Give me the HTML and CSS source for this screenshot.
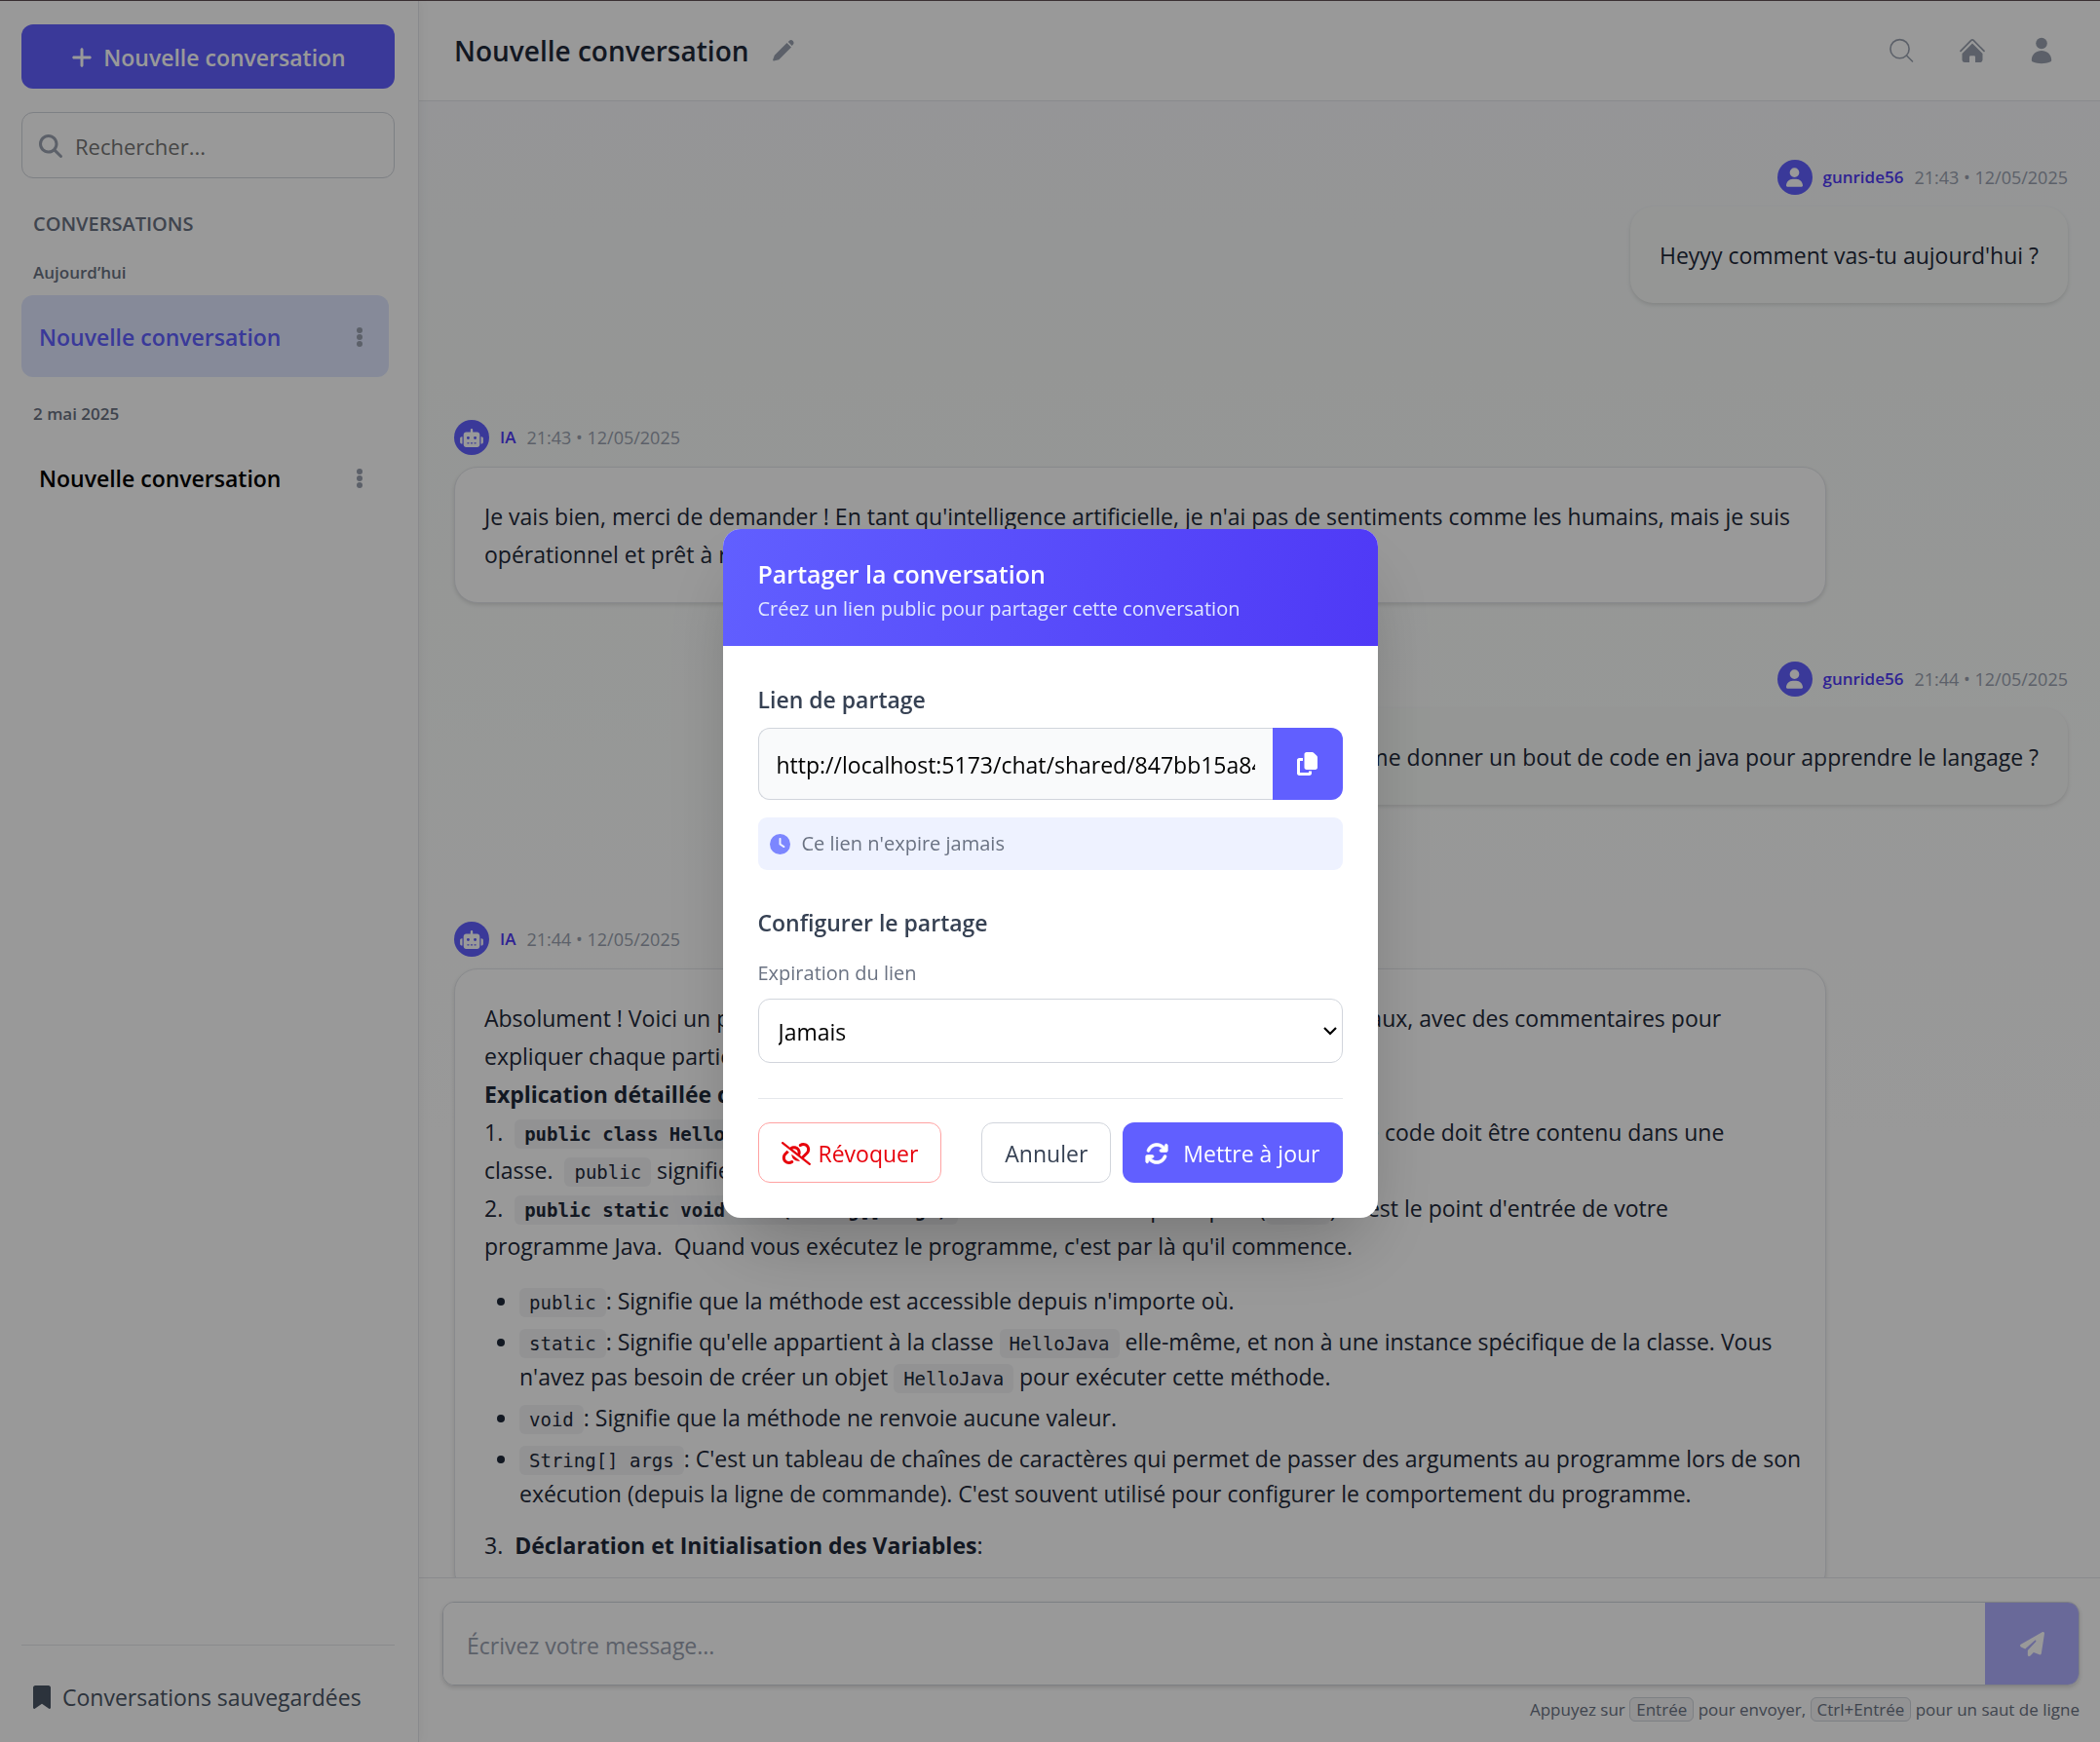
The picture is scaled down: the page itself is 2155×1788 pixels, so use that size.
FILE: index.html
```html
<!DOCTYPE html>
<html lang="fr">
<head>
<meta charset="utf-8">
<title>Nouvelle conversation</title>
<link rel="stylesheet" href="styles.css">
</head>
<body>
<svg class="sprite" aria-hidden="true">
  <symbol id="i-user" viewBox="0 0 448 512"><path d="M224 256A128 128 0 1 0 224 0a128 128 0 1 0 0 256zm-45.700 48C79.800 304 0 383.800 0 482.300C0 498.700 13.300 512 29.700 512H418.300c16.400 0 29.700-13.300 29.700-29.700C448 383.800 368.200 304 269.700 304H178.300z"/></symbol>
  <symbol id="i-robot" viewBox="0 0 640 512"><path d="M320 0c17.700 0 32 14.300 32 32V96H472c39.800 0 72 32.200 72 72V440c0 39.800-32.200 72-72 72H168c-39.800 0-72-32.200-72-72V168c0-39.800 32.200-72 72-72H288V32c0-17.700 14.300-32 32-32zM208 384c-8.800 0-16 7.200-16 16s7.200 16 16 16h32c8.800 0 16-7.200 16-16s-7.200-16-16-16H208zm96 0c-8.800 0-16 7.200-16 16s7.200 16 16 16h32c8.800 0 16-7.200 16-16s-7.200-16-16-16H304zm96 0c-8.800 0-16 7.200-16 16s7.200 16 16 16h32c8.800 0 16-7.200 16-16s-7.200-16-16-16H400zM264 256a40 40 0 1 0 -80 0 40 40 0 1 0 80 0zm152 40a40 40 0 1 0 0-80 40 40 0 1 0 0 80zM48 224H64V416H48c-26.500 0-48-21.500-48-48V272c0-26.500 21.500-48 48-48zm544 0c26.500 0 48 21.500 48 48v96c0 26.500-21.500 48-48 48H576V224h16z"/></symbol>
  <symbol id="i-dots" viewBox="0 0 6 20"><circle cx="3" cy="3" r="3"/><circle cx="3" cy="10" r="3"/><circle cx="3" cy="17" r="3"/></symbol>
</svg>

<div class="app">
  <aside class="sidebar">
    <button class="new-chat" type="button">
      <svg width="24" height="24" viewBox="0 0 448 512"><path d="M256 80c0-17.700-14.300-32-32-32s-32 14.300-32 32V224H48c-17.700 0-32 14.300-32 32s14.300 32 32 32H192V432c0 17.700 14.300 32 32 32s32-14.300 32-32V288H400c17.700 0 32-14.300 32-32s-14.300-32-32-32H256V80z"/></svg>
      Nouvelle conversation
    </button>
    <label class="search">
      <svg width="24" height="24" viewBox="0 0 512 512"><path d="M416 208c0 45.900-14.900 88.300-40 122.700L502.600 457.400c12.500 12.500 12.500 32.800 0 45.300s-32.800 12.500-45.300 0L330.700 376c-34.400 25.200-76.800 40-122.700 40C93.100 416 0 322.900 0 208S93.100 0 208 0S416 93.100 416 208zM208 352a144 144 0 1 0 0-288 144 144 0 1 0 0 288z"/></svg>
      <input type="text" placeholder="Rechercher..." aria-label="Rechercher">
    </label>
    <h2 class="side-title">CONVERSATIONS</h2>
    <h3 class="side-date">Aujourd’hui</h3>
    <div class="conv conv-active">
      <a href="#">Nouvelle conversation</a>
      <button type="button" aria-label="Options"><svg width="6" height="20"><use href="#i-dots"/></svg></button>
    </div>
    <h3 class="side-date side-date-next">2 mai 2025</h3>
    <div class="conv">
      <a href="#">Nouvelle conversation</a>
      <button type="button" aria-label="Options"><svg width="6" height="20"><use href="#i-dots"/></svg></button>
    </div>
    <div class="side-foot">
      <a href="#">
        <svg width="18" height="24" viewBox="0 0 384 512"><path d="M0 48V487.700C0 501.100 10.900 512 24.300 512c5 0 9.900-1.500 14-4.400L192 400 345.700 507.600c4.100 2.900 9 4.400 14 4.400c13.400 0 24.300-10.900 24.300-24.300V48c0-26.500-21.500-48-48-48H48C21.500 0 0 21.500 0 48z"/></svg>
        Conversations sauvegardées
      </a>
    </div>
  </aside>

  <main class="main">
    <header class="topbar">
      <h1>Nouvelle conversation</h1>
      <button type="button" aria-label="Renommer"><svg width="22" height="22" viewBox="0 0 22 22"><path d="M1 21.500c-.8 0-1-.6-.8-1.300l1.600-4.500L14.500 3l4.500 4.500L6.300 20.200zM15.800 2l1.200-1.200c1.200-1 2.600-.9 3.700.2s1.100 2.600.1 3.700L19.700 6z"/></svg></button>
      <nav>
        <a href="#" aria-label="Rechercher"><svg width="26" height="26" viewBox="0 0 26 26" fill="none" stroke="currentColor" stroke-width="1.600" stroke-linecap="round"><circle cx="11.500" cy="11.200" r="9.600"/><path d="M18.500 18l6 6"/></svg></a>
        <a href="#" aria-label="Accueil"><svg width="28" height="26" viewBox="0 0 28 26"><path d="M2 13.400L12.800 2.400q1.200-1.100 2.400 0L26 13.400" fill="none" stroke="currentColor" stroke-width="1.700" stroke-linecap="round"/><path d="M14 5.500l10.500 10.400v6.700q0 2.400-2.400 2.400H17v-5.500q0-1.200-1.200-1.200h-3.600q-1.200 0-1.200 1.200V25H5.900q-2.400 0-2.400-2.400v-6.700z"/></svg></a>
        <a href="#" aria-label="Profil"><svg width="22" height="28" viewBox="0 0 22 28"><circle cx="11" cy="6.500" r="5.800"/><path d="M.8 23.500C1 17.800 5.600 14 11 14s10 3.800 10.200 9.500c0 1-.4 1.600-1.300 2-5.400 2.200-12.400 2.200-17.800 0-.9-.4-1.300-1-1.300-2z"/></svg></a>
      </nav>
    </header>

    <section class="chat">
      <article class="msg msg-user">
        <div class="meta"><span class="avatar"><svg width="17" height="20"><use href="#i-user"/></svg></span><b>gunride56</b><time>21:43 • 12/05/2025</time></div>
        <div class="bubble">Heyyy comment vas-tu aujourd'hui ?</div>
      </article>
      <article class="msg">
        <div class="meta"><span class="avatar"><svg width="24" height="19"><use href="#i-robot"/></svg></span><b>IA</b><time>21:43 • 12/05/2025</time></div>
        <div class="bubble">Je vais bien, merci de demander ! En tant qu'intelligence artificielle, je n'ai pas de sentiments comme les humains, mais je suis<br>opérationnel et prêt à répondre à vos questions !</div>
      </article>
      <article class="msg msg-user">
        <div class="meta"><span class="avatar"><svg width="17" height="20"><use href="#i-user"/></svg></span><b>gunride56</b><time>21:44 • 12/05/2025</time></div>
        <div class="bubble">Peux-tu me donner un bout de code en java pour apprendre le langage ?</div>
      </article>
      <article class="msg">
        <div class="meta"><span class="avatar"><svg width="24" height="19"><use href="#i-robot"/></svg></span><b>IA</b><time>21:44 • 12/05/2025</time></div>
        <div class="bubble">
          Absolument ! Voici un programme Java simple qui illustre divers concepts fondamentaux, avec des commentaires pour<br>
          expliquer chaque partie :<br>
          <strong>Explication détaillée du code :</strong><br>
          1.&nbsp; <strong><code>public class HelloJava</code></strong>: Déclare une classe principale nommée HelloJava. Tout le code doit être contenu dans une<br>
          classe.&nbsp; <code>public</code> signifie que la classe est accessible.<br>
          2.&nbsp; <strong><code>public static void main(String[] args)</code></strong>: C'est la méthode principale (<code>main</code>). C'est le point d'entrée de votre<br>
          programme Java.&nbsp; Quand vous exécutez le programme, c'est par là qu'il commence.
          <ul>
            <li><code>public</code>: Signifie que la méthode est accessible depuis n'importe où.</li>
            <li><code>static</code>: Signifie qu'elle appartient à la classe <code>HelloJava</code> elle-même, et non à une instance spécifique de la classe. Vous<br>n'avez pas besoin de créer un objet <code>HelloJava</code> pour exécuter cette méthode.</li>
            <li><code>void</code>: Signifie que la méthode ne renvoie aucune valeur.</li>
            <li><code>String[] args</code>: C'est un tableau de chaînes de caractères qui permet de passer des arguments au programme lors de son<br>exécution (depuis la ligne de commande). C'est souvent utilisé pour configurer le comportement du programme.</li>
          </ul>
          3.&nbsp; <strong>Déclaration et Initialisation des Variables</strong>:
        </div>
      </article>
    </section>

    <footer class="composer">
      <form class="compose-box">
        <input type="text" placeholder="Écrivez votre message..." aria-label="Message">
        <button type="button" aria-label="Envoyer"><svg width="25" height="25" viewBox="0 0 512 512"><path d="M498.100 5.600c10.100 7 15.400 19.100 13.500 31.200l-64 416c-1.500 9.700-7.400 18.200-16 23s-18.900 5.400-28 1.600L284 427.700l-68.500 74.100c-8.900 9.700-22.900 12.900-35.200 8.100S160 493.200 160 480V396.400c0-4 1.500-7.800 4.200-10.700L331.800 202.800c5.800-6.300 5.600-16-.4-22s-15.700-6.400-22-.7L106 360.800 17.700 316.600C7.100 311.300 .3 300.700 0 288.900s5.900-22.800 16.100-28.700l448-256c10.700-6.100 23.900-5.500 34 1.400z"/></svg></button>
      </form>
      <p class="hint">Appuyez sur <kbd>Entrée</kbd> pour envoyer, <kbd>Ctrl+Entrée</kbd> pour un saut de ligne</p>
    </footer>
  </main>
</div>

<div class="overlay">
  <div class="modal" role="dialog" aria-labelledby="share-title">
    <header class="modal-head">
      <h2 id="share-title">Partager la conversation</h2>
      <p>Créez un lien public pour partager cette conversation</p>
    </header>
    <div class="modal-body">
      <label class="field-title" for="share-link">Lien de partage</label>
      <div class="link-row">
        <input id="share-link" type="text" readonly value="http://localhost:5173/chat/shared/847bb15a84c94d2f">
        <button type="button" aria-label="Copier"><svg width="25" height="24" viewBox="-32 0 512 512"><path d="M208 0H332.100c12.700 0 24.900 5.100 33.900 14.100l67.900 67.900c9 9 14.100 21.200 14.100 33.900V336c0 26.500-21.500 48-48 48H208c-26.500 0-48-21.500-48-48V48c0-26.500 21.500-48 48-48zM48 128h80v64H64V448H256V416h64v48c0 26.500-21.500 48-48 48H48c-26.500 0-48-21.500-48-48V176c0-26.500 21.500-48 48-48z"/></svg></button>
      </div>
      <p class="expiry"><svg width="21" height="21" viewBox="0 0 512 512"><path d="M256 0a256 256 0 1 1 0 512A256 256 0 1 1 256 0zM232 120V256c0 8 4 15.500 10.700 20l96 64c11 7.400 25.900 4.400 33.300-6.700s4.400-25.900-6.700-33.300L280 243.200V120c0-13.300-10.700-24-24-24s-24 10.700-24 24z"/></svg>Ce lien n'expire jamais</p>
      <h3 class="field-title section-title">Configurer le partage</h3>
      <label class="field-label" for="expiry">Expiration du lien</label>
      <div class="select">
        <select id="expiry"><option>Jamais</option></select>
        <svg width="14" height="10" viewBox="0 0 14 10" fill="none" stroke="#000" stroke-width="2.200"><path d="M1 2l6 6 6-6"/></svg>
      </div>
      <div class="actions">
        <button class="btn btn-danger" type="button"><svg width="30" height="24" viewBox="0 0 640 512"><path d="M38.800 5.100C28.400-3.100 13.300-1.200 5.100 9.200S-1.200 34.700 9.200 42.900l592 464c10.400 8.200 25.500 6.300 33.700-4.100s6.300-25.500-4.100-33.700L489.300 358.200l90.500-90.500c56.500-56.500 56.500-148 0-204.500c-50-50-128.800-56.500-186.300-15.400l-1.600 1.100c-14.400 10.300-17.700 30.300-7.400 44.600s30.300 17.700 44.600 7.400l1.600-1.100c32.100-22.900 76-19.300 103.800 8.600c31.500 31.500 31.500 82.500 0 114l-96 96-31.900-25C430.900 239.600 420.100 175.100 377 132c-52.200-52.300-134.500-56.200-191.300-11.700L38.800 5.100zM239 162c30.100-14.900 67.700-9.900 92.800 15.300c20 20 27.500 48.300 21.700 74.500L239 162zM406.600 416.400L220.900 270c-2.100 39.800 12.200 80.100 42.200 110c38.900 38.900 94.400 51 143.600 36.300zm-290-228.500L60.200 244.300c-56.500 56.500-56.500 148 0 204.500c50 50 128.800 56.500 186.300 15.400l1.600-1.100c14.400-10.300 17.700-30.300 7.400-44.600s-30.300-17.700-44.600-7.400l-1.600 1.100c-32.100 22.900-76 19.300-103.800-8.600C74 372 74 321 105.500 289.500l61.800-61.800-50.600-39.900z"/></svg>Révoquer</button>
        <button class="btn btn-plain" type="button">Annuler</button>
        <button class="btn btn-primary" type="button"><svg width="24" height="24" viewBox="0 0 512 512"><path d="M105.100 202.600c7.700-21.800 20.200-42.300 37.800-59.800c62.500-62.500 163.800-62.500 226.300 0L386.300 160H352c-17.700 0-32 14.300-32 32s14.300 32 32 32H463.900c17.700 0 32-14.300 32-32V80c0-17.700-14.300-32-32-32s-32 14.300-32 32v35.200L414.400 97.600c-87.500-87.500-229.300-87.500-316.800 0C73.200 122 55.600 150.700 44.800 181.400c-5.900 16.700 2.900 34.900 19.500 40.800s34.900-2.900 40.800-19.500zM39 289.300c-5 1.500-9.800 4.200-13.700 8.200c-4 4-6.700 8.800-8.100 14c-.3 1.200-.6 2.500-.8 3.800c-.3 1.700-.4 3.400-.4 5.100V432c0 17.700 14.300 32 32 32s32-14.300 32-32V396.900l17.600 17.500c87.500 87.400 229.300 87.400 316.700 0c24.400-24.400 42.100-53.100 52.900-83.700c5.900-16.700-2.900-34.900-19.500-40.800s-34.900 2.900-40.800 19.500c-7.700 21.800-20.200 42.300-37.800 59.800c-62.500 62.500-163.800 62.500-226.300 0L125.600 352H160c17.700 0 32-14.300 32-32s-14.300-32-32-32H48.400z" stroke="currentColor" stroke-width="14"/></svg>Mettre à jour</button>
      </div>
    </div>
  </div>
</div>
</body>
</html>
```
FILE: styles.css
```css
* { box-sizing: border-box; margin: 0; }

body {
  font-family: "Open Sans", "Noto Sans", sans-serif;
  font-size: 23px;
  line-height: 36px;
  color: #1e2939;
}

button, input, select { font: inherit; }
button { border: 0; background: none; padding: 0; color: inherit; display: flex; align-items: center; justify-content: center; }
a { color: inherit; text-decoration: none; }
svg { fill: currentColor; flex: none; }
svg[fill="none"] { fill: none; }
h1, h2, h3 { font-weight: 600; }
.sprite { display: none; }

.app { display: flex; height: 100vh; border-top: 1px solid #3a3033; }

/* Sidebar */
.sidebar {
  width: 430px;
  flex: none;
  display: flex;
  flex-direction: column;
  padding: 24px 24px 28px 22px;
  background: #fff;
  border-right: 1px solid #e5e7eb;
  box-shadow: 0 0 12px rgba(0, 0, 0, .06);
  z-index: 1;
}
.new-chat {
  height: 66px;
  margin-bottom: 24px;
  padding-top: 2px;
  gap: 10px;
  border-radius: 12px;
  background: #615fff;
  color: #fff;
  font-weight: 600;
}
.search {
  display: flex;
  align-items: center;
  gap: 13px;
  height: 68px;
  padding: 2px 17px 0;
  border: 1px solid #d1d5dc;
  border-radius: 12px;
  color: #99a1af;
}
.search input { flex: 1; min-width: 0; border: 0; padding: 0; background: none; outline: 0; font-size: 22px; }
.search input::placeholder { color: #757575; opacity: 1; }
.side-title { margin: 31px 12px 0; font-size: 20px; line-height: 32px; color: #6a7282; }
.side-date { margin: 20px 12px 9px; font-size: 17px; line-height: 28px; color: #6a7282; }
.side-date-next { margin-top: 24px; }
.conv {
  display: flex;
  align-items: center;
  justify-content: space-between;
  height: 84px;
  margin-right: 6px;
  padding: 2px 27px 0 18px;
  border-radius: 12px;
  font-weight: 600;
  color: #000;
}
.conv button { color: #99a1af; }
.conv-active { background: #dfe7ff; color: #615fff; }
.side-foot { margin-top: auto; padding: 35px 12px 0; border-top: 1px solid #e5e7eb; color: #4a5565; }
.side-foot a { display: flex; align-items: center; gap: 12px; }

/* Main column */
.main { flex: 1; min-width: 0; display: flex; flex-direction: column; }
.topbar {
  flex: none;
  display: flex;
  align-items: center;
  height: 103px;
  padding: 0 49px 0 36px;
  border-bottom: 1px solid #e5e7eb;
  color: #99a1af;
}
.topbar h1 { font-size: 28px; color: #1e2939; margin-right: 24px; }
.topbar nav { display: flex; align-items: center; gap: 46px; margin-left: auto; }
.topbar nav a { display: flex; }

.chat {
  flex: 1;
  min-height: 0;
  overflow: hidden;
  padding: 0 33px 0 36px;
  background: linear-gradient(#f8f9fc, #f8fbf9 18%, #fff 70%);
}
.msg { padding-top: 60px; }
.msg-user { padding-bottom: 60px; display: flex; flex-direction: column; align-items: flex-end; }
.meta { display: flex; align-items: center; gap: 11px; height: 36px; margin-bottom: 12px; font-size: 17px; }
.meta b { font-weight: 600; color: #4f39f6; }
.meta time { font-size: 18px; color: #99a1af; }
.avatar {
  width: 36px;
  height: 36px;
  display: flex;
  align-items: center;
  justify-content: center;
  border-radius: 50%;
  background: #615fff;
  color: #fff;
}
.bubble {
  max-width: 85%;
  padding: 31px 24px 29px 30px;
  border: 1px solid #e5e7eb;
  border-radius: 24px;
  background: #fff;
  box-shadow: 0 2px 4px rgba(0, 0, 0, .12);
  line-height: 39px;
}
.msg-user .bubble { padding-right: 30px; background: #f9fbf9; border: 0; }
.bubble code {
  padding: 4px 10px;
  border-radius: 6px;
  background: #f3f4f6;
  font-family: "DejaVu Sans Mono", monospace;
  font-size: 19px;
  line-height: 1;
}
.bubble ul { margin: 18px 0 16px; padding-left: 36px; }
.bubble li { line-height: 36px; margin-bottom: 6px; }

.composer { flex: none; padding: 24px 21px 18px 24px; border-top: 1px solid #e5e7eb; background: #fff; }
.compose-box {
  display: flex;
  height: 86px;
  border: 1px solid #d1d5dc;
  border-radius: 12px;
  overflow: hidden;
  box-shadow: 0 2px 4px rgba(0, 0, 0, .15);
}
.compose-box input { flex: 1; border: 0; padding: 4px 24px 0; outline: 0; }
.compose-box input::placeholder { color: #99a1af; opacity: 1; }
.compose-box button { width: 96px; background: #b0afff; color: #fff; }
.hint { margin-top: 10px; text-align: right; font-size: 17px; line-height: 30px; color: #6a7282; }
.hint kbd { padding: 0 6px; border: 1px solid #d1d5dc; border-radius: 6px; background: #f3f4f6; font: inherit; }

/* Share dialog */
.overlay {
  position: fixed;
  inset: 1px 0 0;
  z-index: 2;
  display: flex;
  align-items: center;
  justify-content: center;
  padding-top: 4px;
  background: rgba(0, 0, 0, .4);
}
.modal {
  width: 672px;
  border-radius: 18px;
  overflow: hidden;
  background: #fff;
  box-shadow: 0 36px 72px -18px rgba(0, 0, 0, .25);
}
.modal-head { padding: 28px 36px 20px; background: linear-gradient(100deg, #615fff, #4f39f6); color: #fff; }
.modal-head h2 { font-size: 25px; }
.modal-head p { font-size: 20px; line-height: 36px; color: #e0e7ff; }
.modal-body { padding: 37px 36px 36px; }
.field-title { display: block; margin-bottom: 11px; font-size: 23px; font-weight: 600; color: #364153; }
.section-title { margin-bottom: 18px; }
.link-row { display: flex; height: 74px; margin-bottom: 18px; }
.link-row input {
  flex: 1;
  min-width: 0;
  padding: 2px 18px 0;
  border: 1px solid #d1d5dc;
  border-right: 0;
  border-radius: 12px 0 0 12px;
  background: #f9fafb;
  color: #000;
}
.link-row button { width: 72px; border-radius: 0 12px 12px 0; background: #615fff; color: #fff; }
.expiry {
  display: flex;
  align-items: center;
  gap: 12px;
  height: 54px;
  margin-bottom: 36px;
  padding: 0 12px;
  border-radius: 9px;
  background: #eef2ff;
  font-size: 20px;
  color: #6a7282;
}
.expiry svg { color: #7c86ff; }
.field-label { display: block; margin-bottom: 10px; font-size: 20px; line-height: 32px; color: #6a7282; }
.select { position: relative; padding-bottom: 36px; border-bottom: 1px solid #e5e7eb; }
.select select {
  display: block;
  width: 100%;
  height: 66px;
  padding: 2px 20px 0;
  border: 1px solid #d1d5dc;
  border-radius: 12px;
  appearance: none;
  background: #fff;
  color: #000;
}
.select svg { position: absolute; right: 6px; top: 28px; }
.actions { display: flex; gap: 12px; padding-top: 24px; }
.btn { height: 62px; padding: 2px 23px 0; border-radius: 12px; }
.btn-danger { gap: 8px; margin-right: auto; border: 1px solid #ffa2a2; color: #e7000b; }
.btn-plain { border: 1px solid #d1d5dc; color: #364153; }
.btn-primary { gap: 15px; background: #615fff; color: #fff; }
```
